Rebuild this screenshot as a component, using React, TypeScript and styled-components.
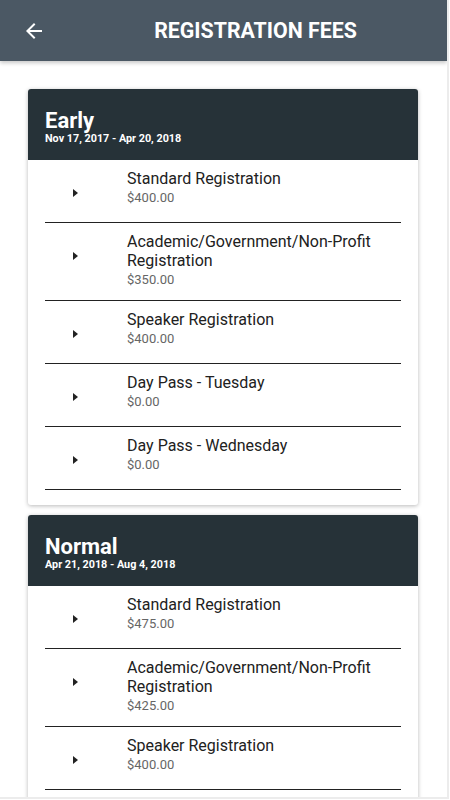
import React from 'react'
import styled, { createGlobalStyle } from 'styled-components'

type Fee = { name: string; price: string }
type Period = { title: string; dates: string; fees: Fee[] }

const periods: Period[] = [
  {
    title: 'Early',
    dates: 'Nov 17, 2017 - Apr 20, 2018',
    fees: [
      { name: 'Standard Registration', price: '$400.00' },
      { name: 'Academic/Government/Non-Profit Registration', price: '$350.00' },
      { name: 'Speaker Registration', price: '$400.00' },
      { name: 'Day Pass - Tuesday', price: '$0.00' },
      { name: 'Day Pass - Wednesday', price: '$0.00' },
    ],
  },
  {
    title: 'Normal',
    dates: 'Apr 21, 2018 - Aug 4, 2018',
    fees: [
      { name: 'Standard Registration', price: '$475.00' },
      { name: 'Academic/Government/Non-Profit Registration', price: '$425.00' },
      { name: 'Speaker Registration', price: '$400.00' },
      { name: 'Day Pass - Tuesday', price: '$0.00' },
      { name: 'Day Pass - Wednesday', price: '$0.00' },
    ],
  },
]

const GlobalStyle = createGlobalStyle`
  html, body {
    margin: 0;
    padding: 0;
    background: #fff;
    font-family: Roboto, "Liberation Sans", sans-serif;
  }
`

export default function App(): JSX.Element {
  return (
    <>
      <GlobalStyle />
      <Frame>
        {/* top bar */}
        <TopBar>
          <BackButton type="button" aria-label="back">
            <svg width="24" height="24" viewBox="0 0 24 24">
              <path
                d="M20 11H7.83l5.59-5.59L12 4l-8 8 8 8 1.41-1.41L7.83 13H20v-2z"
                fill="#fff"
              />
            </svg>
          </BackButton>
          <Title>REGISTRATION FEES</Title>
        </TopBar>

        <Content>
          {periods.map((p) => (
            <Card key={p.title}>
              <CardHeader>
                <PeriodName>{p.title}</PeriodName>
                <PeriodDates>{p.dates}</PeriodDates>
              </CardHeader>
              <FeeList>
                {p.fees.map((f, i) => (
                  <FeeRow key={i}>
                    <ArrowCell>
                      <Arrow />
                    </ArrowCell>
                    <FeeText>
                      <FeeName>{f.name}</FeeName>
                      <FeePrice>{f.price}</FeePrice>
                    </FeeText>
                  </FeeRow>
                ))}
              </FeeList>
            </Card>
          ))}
        </Content>
      </Frame>
    </>
  )
}

const Frame = styled.div`
  width: 447px;
  height: 797px;
  overflow: hidden;
  border-right: 2px solid #ececec;
  border-bottom: 2px solid #ececec;
  display: flex;
  flex-direction: column;
  background: #fff;
`

const TopBar = styled.header`
  height: 61px;
  flex-shrink: 0;
  display: flex;
  align-items: center;
  background: #4b5864;
  box-shadow: 0 2px 4px rgba(0, 0, 0, 0.22);
  position: relative;
  z-index: 1;
`

const BackButton = styled.button`
  width: 60px;
  height: 61px;
  border: 0;
  background: transparent;
  padding: 0;
  display: flex;
  align-items: center;
  justify-content: center;
  margin-left: 4px;
  cursor: pointer;
`

const Title = styled.h1`
  flex: 1;
  margin: 0;
  text-align: center;
  color: #fff;
  font-size: 21.3px;
  font-weight: 700;
`

const Content = styled.div`
  padding: 28px 29px 0 28px;
  display: flex;
  flex-direction: column;
  gap: 10px;
`

const Card = styled.section`
  background: #fff;
  border-radius: 3px;
  box-shadow: 0 1px 4px rgba(0, 0, 0, 0.28);
  padding-bottom: 15px;
  flex-shrink: 0;
`

const CardHeader = styled.div`
  background: #263238;
  border-radius: 3px 3px 0 0;
  height: 71px;
  box-sizing: border-box;
  padding: 21px 17px 0;
  color: #fff;
`

const PeriodName = styled.div`
  font-size: 22px;
  font-weight: 700;
  line-height: 22px;
`

const PeriodDates = styled.div`
  font-size: 10.8px;
  font-weight: 700;
  line-height: 14px;
`

const FeeList = styled.div`
  padding: 0 17px;
`

const FeeRow = styled.div`
  display: flex;
  align-items: flex-start;
  min-height: 63px;
  box-sizing: border-box;
  padding: 9px 0 11px;
  border-bottom: 1px solid #222;
`

const ArrowCell = styled.div`
  width: 82px;
  flex-shrink: 0;
  padding: 20px 0 0 28px;
  box-sizing: border-box;
`

const Arrow = styled.span`
  display: block;
  width: 0;
  height: 0;
  border-top: 4px solid transparent;
  border-bottom: 4px solid transparent;
  border-left: 5px solid #222;
`

const FeeText = styled.div`
  display: flex;
  flex-direction: column;
  padding-right: 20px;
`

const FeeName = styled.div`
  font-size: 16px;
  line-height: 19px;
  color: #212121;
`

const FeePrice = styled.div`
  font-size: 13px;
  line-height: 19px;
  color: #666;
`
